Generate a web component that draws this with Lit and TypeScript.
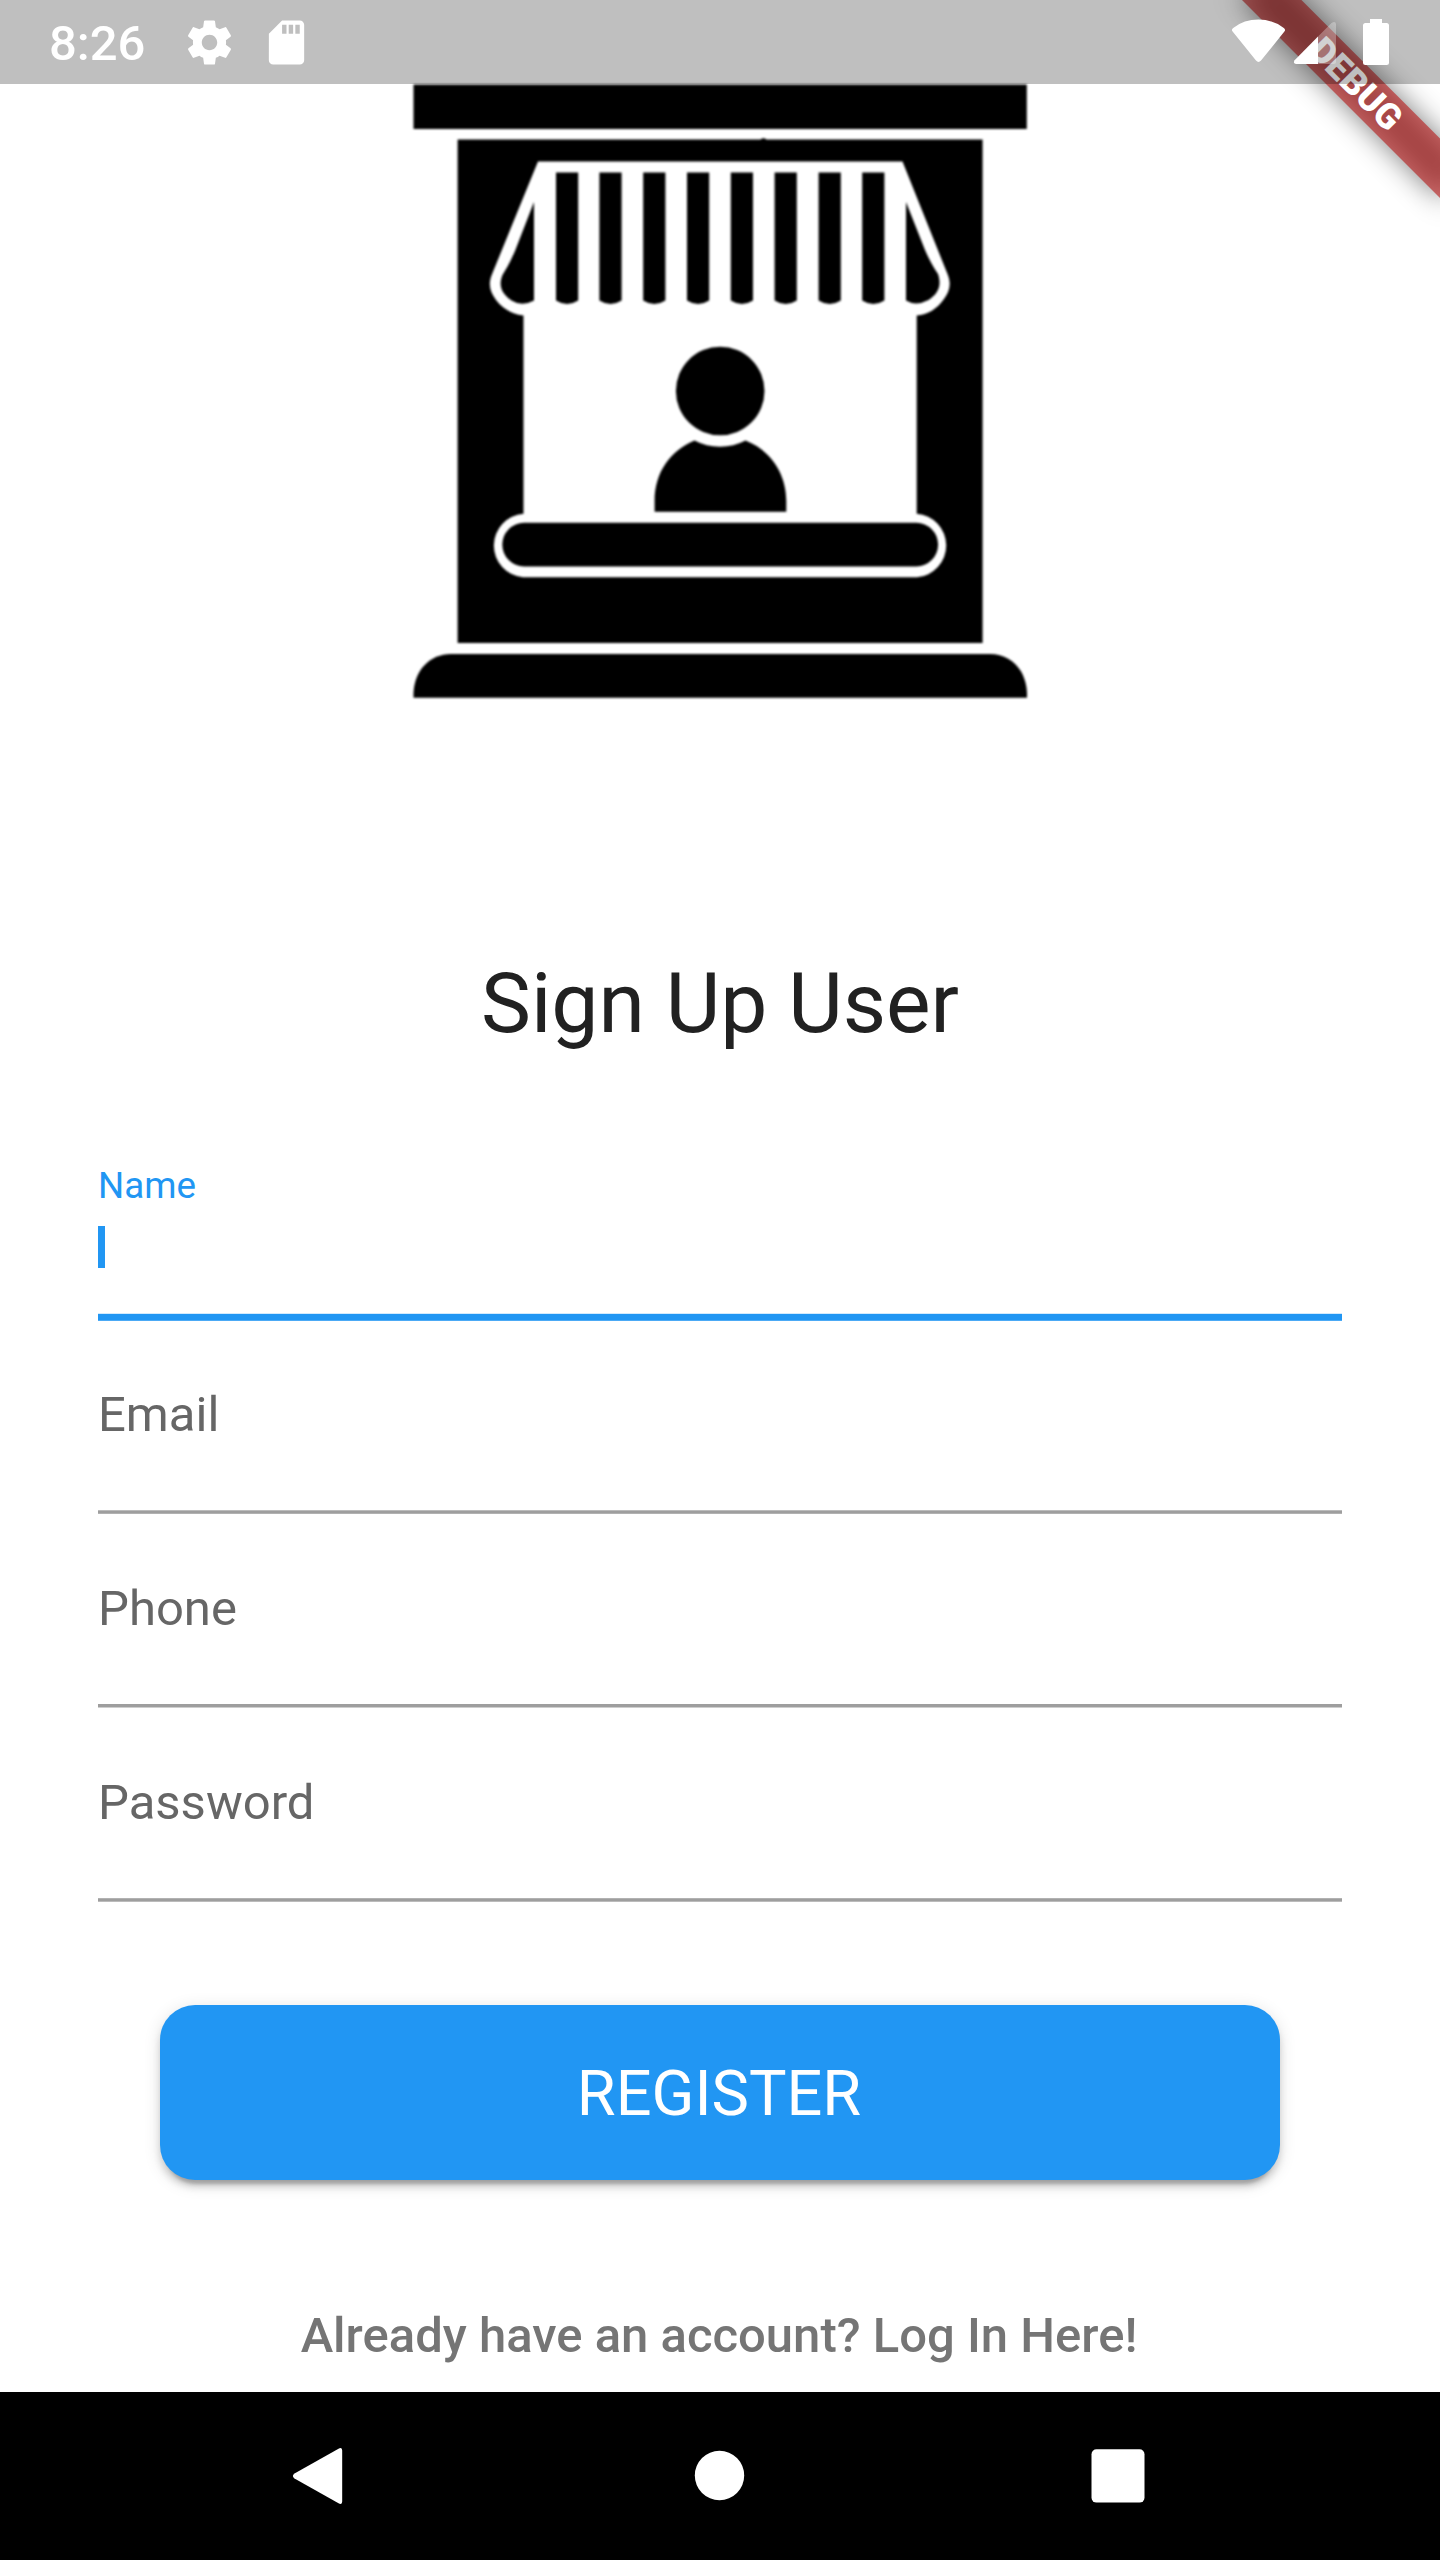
import { LitElement, html, css, svg } from "lit";
import { customElement, property } from "lit/decorators.js";

@customElement("status-bar")
class StatusBar extends LitElement {
  static styles = css`
    :host {
      display: flex;
      align-items: flex-start;
      justify-content: space-between;
      box-sizing: border-box;
      width: 1440px;
      height: 84px;
      background: rgba(0, 0, 0, 0.25);
      color: #fff;
      font-family: Roboto, sans-serif;
    }
    .left {
      display: flex;
      padding-left: 49px;
    }
    .time {
      width: 134px;
      padding-top: 16px;
      font-size: 49px;
      line-height: 56px;
      font-weight: 500;
      white-space: nowrap;
    }
    .left .icon {
      width: 53px;
      height: 53px;
      margin-top: 16px;
    }
    .left .sd {
      margin-left: 24px;
    }
    svg {
      display: block;
      fill: #fff;
    }
  `;
  render() {
    return html`
      <div class="left">
        <div class="time">8:26</div>
        <svg class="icon" viewBox="0 0 24 24">
          <path
            d="M19.43 12.98c.04-.32.07-.64.07-.98s-.03-.66-.07-.98l2.11-1.65c.19-.15.24-.42.12-.64l-2-3.46c-.12-.22-.39-.3-.61-.22l-2.49 1c-.52-.4-1.08-.73-1.69-.98l-.38-2.65C14.46 2.18 14.25 2 14 2h-4c-.25 0-.46.18-.49.42l-.38 2.65c-.61.25-1.17.59-1.69.98l-2.49-1c-.23-.09-.49 0-.61.22l-2 3.46c-.13.22-.07.49.12.64l2.11 1.65c-.04.32-.07.65-.07.98s.03.66.07.98l-2.11 1.65c-.19.15-.24.42-.12.64l2 3.46c.12.22.39.3.61.22l2.49-1c.52.4 1.08.73 1.69.98l.38 2.65c.03.24.24.42.49.42h4c.25 0 .46-.18.49-.42l.38-2.65c.61-.25 1.17-.59 1.69-.98l2.49 1c.23.09.49 0 .61-.22l2-3.46c.12-.22.07-.49-.12-.64l-2.11-1.65zM12 15.5c-1.93 0-3.5-1.57-3.5-3.5s1.57-3.5 3.5-3.5 3.5 1.57 3.5 3.5-1.57 3.5-3.5 3.5z"
          ></path>
        </svg>
        <svg class="icon sd" viewBox="0 0 24 24">
          <path
            d="M18 2h-8L4.02 8 4 20c0 1.1.9 2 2 2h12c1.1 0 2-.9 2-2V4c0-1.1-.9-2-2-2zm-6 6h-2V4h2v4zm3 0h-2V4h2v4zm3 0h-2V4h2v4z"
          ></path>
        </svg>
      </div>
      <svg width="220" height="84" viewBox="1220 0 220 84">
        <path d="M1232.6 31.6Q1231 29.6 1233.2 28Q1244 19.6 1258.5 19.6T1283.8 28Q1286 29.6 1284.4 31.6L1261 60.6Q1258.5 63.4 1256 60.6Z"></path>
        <path d="M1318 36.5V64H1296Q1292.600 63.600 1294.600 60.300Z"></path>
        <path fill-opacity="0.3" d="M1318 36.500L1331.500 23Q1335.500 20.600 1336 24V61.500Q1336 64 1333.500 64H1318Z"></path>
        <path d="M1370 19h12v4h4.500q2.500 0 2.500 2.500v37q0 2.500-2.500 2.500h-21q-2.500 0-2.500-2.500v-37q0-2.500 2.500-2.500h4.500z"></path>
      </svg>
    `;
  }
}

@customElement("shop-logo")
class ShopLogo extends LitElement {
  static styles = css`
    :host {
      display: block;
      width: 616px;
      height: 616px;
    }
    svg {
      display: block;
      overflow: visible;
      filter: blur(0.8px);
    }
  `;
  render() {
    const stripes = [556, 599.4, 643.2, 687, 730.8, 774.6, 818.6, 862.2];
    return html`
      <svg width="616" height="616" viewBox="412 83 616 616">
        <rect x="413.500" y="84.500" width="613.300" height="44.500"></rect>
        <path d="M457.600 139.500H760.500Q763.500 137 766.500 139.500H982.600V643H457.600Z"></path>
        <path
          fill="#fff"
          d="M538 161.500H902.500L947.500 274C952 285 949 292 944 299C937 309 928 314.500 916.700 315.500V513.700A31.900 31.900 0 0 1 917 577.300H523A31.900 31.900 0 0 1 523.500 513.700V315.500C512 314.500 502 308 496 300C490 292 487.500 284 492.500 273Z"
        ></path>
        <path d="M534 202V300.500Q522 307 511.500 300.500C502 294 498 286 502.500 275Q509 265 515 251Z"></path>
        <path d="M906 202V300.500Q916 306.500 928.500 300C938 294 942 286 938 274Q931 264 925 250Z"></path>
        ${stripes.map(
          (x) => svg`<path transform="translate(${x} 0)" d="M0 172.500H22.200V300.500Q11.100 307.500 0 300.500Z"></path>`,
        )}
        <circle cx="720.200" cy="391" r="44.300"></circle>
        <path d="M654.600 511.800V501C654.600 472 671 450 694.500 440.500A55 55 0 0 0 745.500 440.500C770 450 786.300 473 786.300 501V511.800Z"></path>
        <rect x="502.300" y="522.800" width="435.800" height="43.600" rx="21.800"></rect>
        <path d="M413.500 697.700V693C414.500 670 430 654 451 654H990C1011 654 1026 670 1027 693V697.700Z"></path>
      </svg>
    `;
  }
}

@customElement("form-field")
class FormField extends LitElement {
  @property() label = "";
  @property({ type: Boolean, reflect: true }) focused = false;
  @property({ type: Number }) line = 0;

  static styles = css`
    :host {
      display: flex;
      flex-direction: column;
      justify-content: flex-end;
      box-sizing: border-box;
      width: 1244px;
      height: 194px;
      font-family: Roboto, sans-serif;
    }
    .label {
      font-size: 49px;
      line-height: 56px;
      color: #666;
      padding-bottom: 66px;
    }
    .label.small {
      font-size: 36.75px;
      line-height: 42px;
      color: #2196f3;
      padding-bottom: 19px;
    }
    .cursor {
      width: 7px;
      height: 42px;
      margin-bottom: 45px;
      background: #2196f3;
    }
    svg {
      display: block;
    }
  `;
  render() {
    return this.focused
      ? html`
          <div class="label small">${this.label}</div>
          <div class="cursor"></div>
          <svg width="1244" height="8">
            <rect y="0.800" width="1244" height="7" fill="#2196f3"></rect>
          </svg>
        `
      : html`
          <div class="label">${this.label}</div>
          <svg width="1244" height="5">
            <rect y=${this.line} width="1244" height="3.500" fill="#9e9e9e"></rect>
          </svg>
        `;
  }
}

@customElement("debug-banner")
class DebugBanner extends LitElement {
  static styles = css`
    :host {
      position: absolute;
      top: 0;
      right: 0;
      width: 300px;
      height: 300px;
      overflow: hidden;
    }
    .pivot {
      position: absolute;
      left: 300px;
      top: 0;
      transform: rotate(45deg);
      transform-origin: 0 0;
    }
    .shade,
    .band {
      position: absolute;
      left: -140px;
      top: 98px;
      width: 280px;
      height: 42px;
    }
    .shade {
      background: rgba(0, 0, 0, 0.5);
      filter: blur(13.9px);
    }
    .band {
      background: rgba(183, 28, 28, 0.627);
      color: #fff;
      font-family: Roboto, sans-serif;
      font-size: 35.7px;
      line-height: 42px;
      font-weight: 900;
      text-align: center;
    }
  `;
  render() {
    return html`
      <div class="pivot">
        <div class="shade"></div>
        <div class="band">DEBUG</div>
      </div>
    `;
  }
}

@customElement("nav-bar")
class NavBar extends LitElement {
  static styles = css`
    :host {
      display: flex;
      align-items: flex-start;
      justify-content: space-between;
      box-sizing: border-box;
      width: 1440px;
      height: 168px;
      padding: 54px 295px 0 291px;
      background: #000;
    }
    svg {
      display: block;
      fill: #fff;
    }
  `;
  render() {
    return html`
      <svg width="54" height="60" viewBox="291 2446 54 60">
        <path d="M338.500 2448.700Q342.200 2446.800 342.200 2451V2501Q342.200 2505.200 338.500 2503.300L294.500 2478.500Q291.300 2476 294.500 2473.500Z"></path>
      </svg>
      <svg width="54" height="60" viewBox="691 2446 54 60">
        <circle cx="719.500" cy="2475.500" r="24.700"></circle>
      </svg>
      <svg width="54" height="60" viewBox="1091 2446 54 60">
        <rect x="1091.500" y="2449.200" width="53" height="53.400" rx="5"></rect>
      </svg>
    `;
  }
}

@customElement("app-root")
class AppRoot extends LitElement {
  static styles = css`
    :host {
      display: block;
      position: relative;
      width: 1440px;
      height: 2560px;
      overflow: hidden;
      background: #fff;
      font-family: Roboto, sans-serif;
    }
    .screen {
      display: flex;
      flex-direction: column;
      height: 2560px;
    }
    .content {
      display: flex;
      flex-direction: column;
      align-items: center;
      flex: 1;
      min-height: 0;
    }
    .logo {
      margin-top: 83px;
    }
    .title {
      margin-top: 256px;
      font-size: 84px;
      line-height: 98px;
      color: #212121;
    }
    .fields {
      display: flex;
      flex-direction: column;
      margin-top: 74px;
    }
    .second {
      height: 193px;
    }
    .register {
      display: flex;
      align-items: center;
      justify-content: center;
      box-sizing: border-box;
      width: 1120px;
      height: 175px;
      margin-top: 103px;
      padding: 2px 2px 0 0;
      border-radius: 35px;
      background: #2196f3;
      color: #fff;
      font-size: 63px;
      line-height: 74px;
      box-shadow:
        0 10.500px 3.500px -7px rgba(0, 0, 0, 0.2),
        0 7px 7px 0 rgba(0, 0, 0, 0.14),
        0 3.500px 17.500px 0 rgba(0, 0, 0, 0.12);
    }
    .login {
      margin-top: 128px;
      padding-right: 2px;
      font-size: 49px;
      line-height: 56px;
      font-weight: 500;
      color: #757575;
      white-space: nowrap;
    }
    .status {
      position: absolute;
      top: 0;
      left: 0;
    }
  `;
  render() {
    return html`
      <div class="screen">
        <div class="content">
          <shop-logo class="logo"></shop-logo>
          <div class="title">Sign Up User</div>
          <div class="fields">
            <form-field label="Name" focused></form-field>
            <form-field class="second" label="Email" .line=${1.3}></form-field>
            <form-field label="Phone" .line=${1}></form-field>
            <form-field label="Password" .line=${1.2}></form-field>
          </div>
          <div class="register">REGISTER</div>
          <div class="login">Already have an account? Log In Here!</div>
        </div>
        <nav-bar></nav-bar>
      </div>
      <debug-banner></debug-banner>
      <status-bar class="status"></status-bar>
    `;
  }
}
